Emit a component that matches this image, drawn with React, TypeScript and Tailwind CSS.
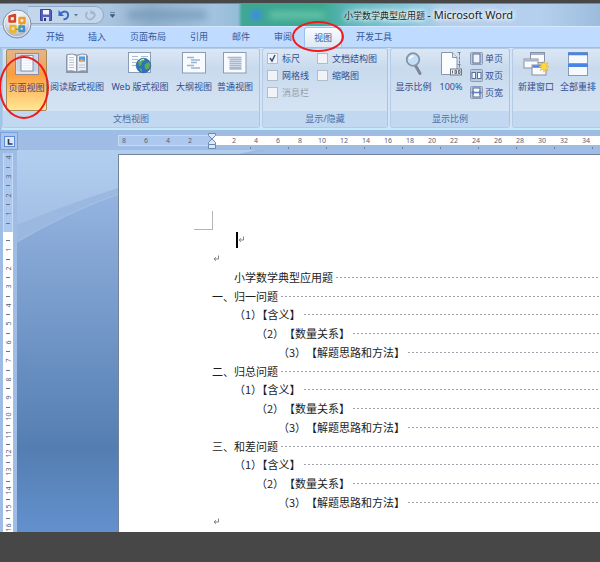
import type { ReactNode } from "react";
import clsx from "clsx";

const tabs = ["开始", "插入", "页面布局", "引用", "邮件", "审阅", "视图", "开发工具"];

const outline = [
  { title: "一、归一问题" },
  { title: "二、归总问题" },
  { title: "三、和差问题" },
];

const leftTicks = [8, 6, 4, 2];
const rightTicks = [2, 4, 6, 8, 10, 12, 14, 16, 18, 20, 22, 24, 26, 28, 30, 32, 34];
const topMarks = ["4", "-", "3", "-", "2", "-", "1", "-"];
const bottomMarks = Array.from({ length: 32 }, (_, i) =>
  i % 2 === 0 ? "-" : String((i + 1) / 2),
);

const OfficeLogo = () => (
  <svg viewBox="0 0 30 30" className="size-[30px]" aria-hidden="true">
    <defs>
      <radialGradient id="orb" cx="50%" cy="30%" r="75%">
        <stop offset="0" stopColor="#ffffff" />
        <stop offset="0.55" stopColor="#d9dee6" />
        <stop offset="1" stopColor="#8f9bab" />
      </radialGradient>
    </defs>
    <circle cx="15" cy="15" r="14" fill="url(#orb)" stroke="#8090a6" />
    <circle cx="15" cy="15" r="12.8" fill="none" stroke="#fff" strokeOpacity=".7" />
    <g fill="none" strokeWidth="2.4" strokeLinejoin="round">
      <path d="M13 12.500H7.500V7.500L13 6z" stroke="#d2452a" />
      <path d="M17.500 9h5v5h-5z" stroke="#f09a28" />
      <path d="M8.500 17H13.500v5.500h-5z" stroke="#f2b31c" />
      <path d="M17.500 17.500h4.500v4.500h-4.500z" stroke="#3f8fd0" />
    </g>
    <path d="M19 15.500v3M13.500 20.500l4-.5" stroke="#7cae3c" strokeWidth="1.600" />
  </svg>
);

const PageIcon = () => (
  <svg viewBox="0 0 24 22" className="h-[22px] w-6" aria-hidden="true">
    <rect x=".5" y=".5" width="23" height="21" fill="#e4e2e2" stroke="#8b8f9c" />
    <rect x="1.500" y="1.500" width="21" height="17" fill="#c6d3e5" />
    <rect x="6" y="2.500" width="12" height="15.500" fill="#f9fbfe" stroke="#7f92b2" />
    <path d="M8 5h8M8 7.500h8M8 10h8M8 12.500h8M8 15h8" stroke="#e6ecf4" />
  </svg>
);

const ReadingIcon = () => (
  <svg viewBox="0 0 24 22" className="h-[22px] w-6" aria-hidden="true">
    <path d="M1 4l1-2h9l1 1.500L13 2h8l2 2v17H1z" fill="#8a96a8" />
    <path d="M2 2.500Q8 1 11.500 3.500V20Q8 18 2 19z" fill="#f7f9fc" stroke="#8b98ac" />
    <path d="M12 3.500Q16 1 21.500 2.500V19Q16 18 12 20z" fill="#e9eef5" stroke="#8b98ac" />
    <path d="M4 5.500h5M4 8h5M4 10.500h5M4 13h5M4 15.500h5M14 13h6M14 15.500h6" stroke="#b7c4d6" />
    <rect x="14" y="4.500" width="6" height="5" fill="#4c9be6" />
    <path d="M14 9.500l2.500-3 3.500 3z" fill="#e9a35a" />
  </svg>
);

const WebIcon = () => (
  <svg viewBox="0 0 24 22" className="h-[22px] w-6" aria-hidden="true">
    <rect x=".5" y=".5" width="22" height="20" fill="#f7fafe" stroke="#8b9bb3" />
    <path d="M4 4.500h6M4 7.500h6M4 10.500h4M4 13.500h4M13 4.500h7" stroke="#a9bdd8" />
    <circle cx="15.500" cy="13.500" r="7.300" fill="#2f6fc4" stroke="#2a5596" strokeWidth=".6" />
    <path d="M10 10q2-4 6-3.500l1 2-3 1.500-.5 3-2.500 1zM17 12l4-2 1.500 3-2 4-3 .5-1-3zM11 16l3 1v3q-2-1-3-4z" fill="#58b04c" />
    <path d="M12 9q2-2 4-1.500" stroke="#cdeaff" fill="none" />
  </svg>
);

const OutlineIcon = () => (
  <svg viewBox="0 0 24 22" className="h-[22px] w-6" aria-hidden="true">
    <rect x=".5" y=".5" width="23" height="20.500" fill="#f7fafe" stroke="#8b9bb3" />
    <path d="M5 5.500h7M9 8h9M9 10.500h6M5 13.500h7M9 16h9" stroke="#9fb3d0" strokeWidth="1.500" />
  </svg>
);

const DraftIcon = () => (
  <svg viewBox="0 0 24 22" className="h-[22px] w-6" aria-hidden="true">
    <rect x=".5" y=".5" width="22.500" height="20.500" fill="#f7fafe" stroke="#8b9bb3" />
    <path d="M4.500 5.500h14M6.500 7.500h12M6.500 9.500h12M6.500 11.500h12M6.500 13.500h12M6.500 15.500h12M6.500 17h12" stroke="#a9b8cf" strokeWidth="1.400" />
  </svg>
);

const ZoomIcon = () => (
  <svg viewBox="0 0 24 24" className="size-6" aria-hidden="true">
    <path d="M13.500 13.500l4.500 8" stroke="#7d8696" strokeWidth="3" strokeLinecap="round" />
    <circle cx="11" cy="7.500" r="6.300" fill="#c4def6" stroke="#8494ab" strokeWidth="1.800" />
    <path d="M7.500 7q1-3 4-3" stroke="#fff" strokeWidth="1.500" fill="none" />
  </svg>
);

const HundredIcon = () => (
  <svg viewBox="0 0 24 24" className="size-6" aria-hidden="true">
    <path d="M2.500 .5h11l4.500 5v17H2.500z" fill="#fbfcfe" stroke="#8a97ab" />
    <path d="M13.500 .5v5H18" fill="#dce4ef" stroke="#8a97ab" />
    <path d="M20.500 .5v15M18.500 .5h4M18.500 12.500h4" stroke="#76849a" strokeDasharray="3 1" />
    <rect x="11.500" y="17" width="11" height="6" fill="#eef1f5" stroke="#6d7889" />
    <path d="M13.500 18.500v3M16 18.500h1.500v3H16zM19.500 18.500H21v3h-1.500z" stroke="#444d5c" strokeWidth=".8" fill="none" />
  </svg>
);

const NewWindowIcon = () => (
  <svg viewBox="0 0 26 24" className="h-6 w-[26px]" aria-hidden="true">
    <g fill="#f9fbfe" stroke="#8491a8">
      <rect x="7.500" y=".5" width="14" height="10" />
      <rect x="1" y="7" width="14" height="9" />
      <rect x="9" y="13" width="14" height="10" />
    </g>
    <path d="M8 2h13M1.500 8.500h13" stroke="#a9b2c2" strokeWidth="2" />
    <path d="M9.500 14.500h13" stroke="#4c86e6" strokeWidth="2.500" />
    <path d="M21 9l1 3 3-1.500-1.500 3 2.500 1-2.500 1.200 1.500 2.800-3-1.200-1 3-1-3-3 1.200 1.500-2.800-2.500-1.200 2.500-1-1.500-3 3 1.500z" fill="#ffd84a" stroke="#e8ac1c" strokeWidth=".5" />
  </svg>
);

const ArrangeIcon = () => (
  <svg viewBox="0 0 20 24" className="h-6 w-5" aria-hidden="true">
    <rect x=".5" y=".5" width="19" height="23" fill="#f6f9fd" stroke="#8a99b5" />
    <path d="M0 1.800h20M0 13.500h20" stroke="#4a84e4" strokeWidth="2.800" />
    <path d="M0 11.500h20" stroke="#8a99b5" />
  </svg>
);

const SmallPageIcon = ({ kind }: { kind: string }) => (
  <svg viewBox="0 0 13 13" className="size-[13px]" aria-hidden="true">
    <rect x=".5" y=".5" width="12" height="12" rx="1" fill="#b9c9df" stroke="#8b9cb8" />
    {kind === "单页" && <rect x="3" y="2" width="7" height="9" fill="#edf3fa" stroke="#5a6f94" />}
    {kind === "双页" && (
      <g fill="#f5f8fc" stroke="#5a6f94">
        <rect x="2" y="3.500" width="3.500" height="6" />
        <rect x="7.500" y="3.500" width="3.500" height="6" />
      </g>
    )}
    {kind === "页宽" && (
      <g>
        <rect x="3" y="2" width="7" height="9" fill="#f5f8fc" stroke="#5a6f94" />
        <path d="M1 6.500l3-2.500v1.700h5V4l3 2.500L9 9V7.300H4V9z" fill="#5b80bd" />
      </g>
    )}
  </svg>
);

const ParagraphMark = () => (
  <svg viewBox="0 0 7 7" className="size-[7px]" aria-hidden="true">
    <path d="M5.500 .5v3.500H1.500M3 2.300L1 4l2 1.800" fill="none" stroke="#777" strokeWidth=".9" />
  </svg>
);

const RedRing = ({ className }: { className: string }) => (
  <span
    className={clsx(
      "pointer-events-none absolute z-20 rounded-[50%] border-2 border-[#ee1c1c]",
      className,
    )}
  />
);

const Group = ({
  label,
  className,
  children,
}: {
  label: string;
  className: string;
  children: ReactNode;
}) => (
  <section
    className={clsx(
      "flex shrink-0 flex-col overflow-hidden rounded-[3px] border border-[#b4cbe6] border-r-[#a9c3e2] bg-linear-to-b from-[#dce7f4] from-0% via-[#c9daee] via-25% to-[#d9e8f6]",
      className,
    )}
  >
    <div className="flex flex-1 items-start">{children}</div>
    <h2 className="h-4 bg-[#c1d8f0] text-center leading-4 text-[#4a6ea8]">{label}</h2>
  </section>
);

const BigButton = ({
  label,
  icon,
  className,
  active = false,
}: {
  label: string;
  icon: ReactNode;
  className: string;
  active?: boolean;
}) => (
  <button
    type="button"
    className={clsx(
      "flex h-[62px] shrink-0 flex-col items-center gap-[5px] whitespace-nowrap pt-[3px]",
      active &&
        "rounded-xs border border-[#a58a5c] bg-linear-to-b from-[#e3b48c] from-0% via-[#fb9d3c] via-40% to-[#ffe793] pt-0.5",
      className,
    )}
  >
    <span className="flex h-6 items-start">{icon}</span>
    <span className="leading-3">{label}</span>
  </button>
);

const Check = ({
  label,
  checked = false,
  disabled = false,
}: {
  label: string;
  checked?: boolean;
  disabled?: boolean;
}) => (
  <label className={clsx("flex h-[17px] items-center gap-1 whitespace-nowrap", disabled && "text-[#9a9da3]")}>
    <span className="grid size-[11px]">
      <input
        type="checkbox"
        defaultChecked={checked}
        disabled={disabled}
        className="peer col-start-1 row-start-1 size-[11px] appearance-none border border-[#b3bcc9] bg-[#f1f3f6]"
      />
      <svg
        viewBox="0 0 11 11"
        className="pointer-events-none invisible col-start-1 row-start-1 size-[11px] peer-checked:visible"
        aria-hidden="true"
      >
        <path d="M3 5l2 3 3-6" fill="none" stroke="#35507f" strokeWidth="1.500" />
      </svg>
    </span>
    {label}
  </label>
);

const Entry = ({
  mark,
  text,
  className,
}: {
  mark?: string;
  text: string;
  className: string;
}) => (
  <li className={clsx("flex items-center whitespace-nowrap", className)}>
    {mark && <span>{mark}</span>}
    <span>{text}</span>
    <span className="ml-[3px] h-px flex-1 bg-[linear-gradient(to_right,#a3a3b0_2px,transparent_2px)] bg-[length:4px_1px]" />
  </li>
);

const TitleBar = () => (
  <header className="relative flex h-[23px] items-center border-t border-[#6f8ba8] bg-[linear-gradient(to_right,#b9cfe6_0px,#a9c4de_110px,#8fafcd_150px,#a3c3e0_215px,#94bdd8_238px,#3fa795_242px,#3aa98f_320px,#5fb7bd_350px,#8fc9e2_420px,#b3cfec_445px,#b5d0ee_540px,#9dbcdc_600px)]">
    <button type="button" aria-label="Office" className="absolute top-[5px] left-0.5 z-10">
      <OfficeLogo />
    </button>
    <div className="ml-7 flex h-[18px] w-[76px] items-center gap-1.5 rounded-r-full border border-l-0 border-[#8ea8c8] bg-[#c3d7ec] pl-3">
      <button type="button" aria-label="保存">
        <svg viewBox="0 0 12 12" className="size-3" aria-hidden="true">
          <path d="M.5 .5h10l1 1v10H.5z" fill="#5560c0" stroke="#3c449a" />
          <path d="M3 1h6v4.500H3z" fill="#f4f6fb" />
          <path d="M3 8h6v4H3z" fill="#d5daea" />
          <path d="M4 9h2v3H4z" fill="#2d3478" />
        </svg>
      </button>
      <button type="button" aria-label="撤消" className="flex items-center gap-1">
        <svg viewBox="0 0 12 12" className="size-3" aria-hidden="true">
          <path d="M2 4.500q7-4 8 .5t-4.500 5.500" fill="none" stroke="#3b69c6" strokeWidth="2" />
          <path d="M.5 1v6h5.500z" fill="#3b69c6" />
        </svg>
        <svg viewBox="0 0 4 3" className="h-[3px] w-1" aria-hidden="true">
          <path d="M0 0h4L2 2.500z" fill="#5b7aa8" />
        </svg>
      </button>
      <button type="button" aria-label="重复">
        <svg viewBox="0 0 12 12" className="size-3" aria-hidden="true">
          <path d="M3.500 3q-3 3-.5 6t6 0 0-6" fill="none" stroke="#a3b4cc" strokeWidth="1.800" />
          <path d="M6.500 .5v4.500h4.500z" fill="#a3b4cc" />
        </svg>
      </button>
    </div>
    <button type="button" aria-label="自定义快速访问工具栏" className="ml-1.5">
      <svg viewBox="0 0 5 6" className="h-1.5 w-[5px]" aria-hidden="true">
        <path d="M0 .5h5M0 2.500h5L2.500 5.500z" fill="#44597c" stroke="#44597c" strokeWidth=".6" />
      </svg>
    </button>
    <span className="ml-3 h-2.5 w-20 rounded-full bg-[#6d8fae]/50 blur-[3px]" />
    <span className="ml-11 size-2.5 bg-[#3f8fd8] blur-[2px]" />
    <span className="ml-2 h-2 w-14 rounded-full bg-[#7fd0b8]/60 blur-[3px]" />
    <h1 className="ml-[19px] whitespace-nowrap text-[11px] leading-4 text-[#1a1f28] [text-shadow:0_0_5px_#fff,0_0_5px_#fff,0_0_8px_#fff]">
      <span className="text-[9px]">小学数学典型应用题 </span> - Microsoft Word
    </h1>
  </header>
);

const Tabs = () => (
  <nav className="relative flex h-[21px] items-end border-t border-[#d6e8ff] bg-[#bfdbff] pl-[34px]">
    {tabs.map((tab) => (
      <button
        key={tab}
        type="button"
        className={clsx(
          "h-5 shrink-0 whitespace-nowrap text-[#34569a]",
          tab === "视图"
            ? "mr-0.5 rounded-t-[3px] border border-b-0 border-[#9fc0ea] bg-linear-to-b from-[#f7fbff] to-[#dde9f6] px-[9px]"
            : "px-3",
        )}
      >
        {tab}
      </button>
    ))}
    <RedRing className="-top-[6px] left-[292px] h-[31px] w-[52px]" />
  </nav>
);

const Ribbon = () => (
  <div className="relative flex h-[83px] gap-0.5 overflow-hidden rounded-l-[3px] border-y border-b-2 border-l-2 border-t-[#9dbfe8] border-b-[#c3ecf8] border-l-[#9fc4ea] bg-[#d3e4f6] text-[#2f4f8f]">
    <Group label="文档视图" className="w-[258px]">
      <BigButton active label="页面视图" icon={<PageIcon />} className="ml-[3px] w-[41px]" />
      <BigButton label="阅读版式视图" icon={<ReadingIcon />} className="w-[60px]" />
      <BigButton label="Web 版式视图" icon={<WebIcon />} className="w-[66px]" />
      <BigButton label="大纲视图" icon={<OutlineIcon />} className="w-[42px]" />
      <BigButton label="普通视图" icon={<DraftIcon />} className="w-[40px]" />
    </Group>
    <Group label="显示/隐藏" className="w-[126px]">
      <div className="grid grid-cols-[50px_auto] pt-px pl-1">
        <Check label="标尺" checked />
        <Check label="文档结构图" />
        <Check label="网格线" />
        <Check label="缩略图" />
        <Check label="消息栏" disabled />
      </div>
    </Group>
    <Group label="显示比例" className="w-[120px]">
      <BigButton label="显示比例" icon={<ZoomIcon />} className="ml-0.5 w-[41px]" />
      <BigButton label="100%" icon={<HundredIcon />} className="w-[34px]" />
      <div className="flex flex-col pt-px pl-0.5">
        {["单页", "双页", "页宽"].map((label) => (
          <button key={label} type="button" className="flex h-[17px] items-center gap-0.5">
            <SmallPageIcon kind={label} />
            {label}
          </button>
        ))}
      </div>
    </Group>
    <Group label="" className="min-w-[120px] flex-1">
      <BigButton label="新建窗口" icon={<NewWindowIcon />} className="ml-0.5 w-[42px]" />
      <BigButton label="全部重排" icon={<ArrangeIcon />} className="w-[42px]" />
    </Group>
  </div>
);

const HorizontalRuler = () => (
  <div className="flex h-5 overflow-hidden bg-[#9ebce4] text-[7px] text-[#56637a]">
    <button
      type="button"
      aria-label="制表符"
      className="mt-0.5 flex size-[18px] shrink-0 items-center justify-center border border-[#7ba0dc] bg-[#a9c5ec]"
    >
      <svg viewBox="0 0 11 11" className="size-[11px]" aria-hidden="true">
        <rect x=".5" y=".5" width="10" height="10" fill="#dce8f8" stroke="#5f8cd8" />
        <path d="M4.500 3v5h4" fill="none" stroke="#2d3a55" strokeWidth="1.600" />
      </svg>
    </button>
    <div className="mt-[5px] ml-[100px] flex h-[11px] w-[94px] shrink-0 justify-end overflow-hidden border-y border-l border-[#c5daf5] bg-[#adc8ee] pr-[11px]">
      {leftTicks.map((n) => (
        <span key={n} className="w-[22px] shrink-0 text-center leading-[9px]">
          {n}
        </span>
      ))}
    </div>
    <div className="relative flex-1">
      <div className="mt-[6px] flex h-[9px] overflow-hidden bg-white pl-[11px]">
        {rightTicks.map((n) => (
          <span key={n} className="w-[22px] shrink-0 text-center leading-[9px]">
            {n}
          </span>
        ))}
      </div>
      <div className="mt-0.5 ml-[38px] h-0.5 bg-[repeating-linear-gradient(to_right,#6c809f_0px,#6c809f_1px,transparent_1px,transparent_38px)]" />
      <svg viewBox="0 0 8 17" className="absolute top-[3px] -left-1 h-[17px] w-2" aria-hidden="true">
        <path d="M.5 .5h7v2L4 6 .5 2.500zM4 6l3.500 3.500v2h-7v-2z" fill="#dce8f8" stroke="#6d88b5" />
        <path d="M.5 11.500h7v4h-7z" fill="#dce8f8" stroke="#6d88b5" />
      </svg>
    </div>
  </div>
);

const RulerMarks = ({ marks }: { marks: string[] }) =>
  marks.map((mark, i) => (
    <span key={i} className="flex min-h-0 flex-1 items-center justify-center">
      {mark === "-" ? (
        <span className="h-px w-1 bg-[#6b7789]" />
      ) : (
        <span className="-rotate-90 leading-none">{mark}</span>
      )}
    </span>
  ));

const VerticalRuler = () => (
  <div className="flex w-[17px] shrink-0 flex-col overflow-hidden bg-[#9ebce4] pt-[3px] pr-1 pl-[3px] text-[7px] text-[#56637a] contain-size">
    <div className="flex h-[79px] shrink-0 flex-col border-x border-[#c5daf5] bg-[#adc8ee] pb-1">
      <RulerMarks marks={topMarks} />
    </div>
    <div className="flex h-[300px] shrink-0 flex-col bg-white pt-1">
      <RulerMarks marks={bottomMarks} />
    </div>
  </div>
);

const Page = () => (
  <main className="mt-1 min-w-0 flex-1 border-t border-l border-[#75839a] bg-white pt-14 pb-px pl-[93px] text-[11px] text-[#1c1c1c] font-['Noto_Sans_CJK_SC',sans-serif]">
    <div className="-ml-[18px] size-[19px] border-r border-b border-[#b5b5b5]" />
    <p className="flex h-[19px] items-center pl-6">
      <span className="h-4 w-0.5 bg-black" />
      <ParagraphMark />
    </p>
    <p className="flex h-[19px] items-center pl-px">
      <ParagraphMark />
    </p>
    <ul>
      <Entry text="小学数学典型应用题" className="h-[19px] pl-[22px]" />
      {outline.map(({ title }) => (
        <li key={title}>
          <ul>
            <Entry text={title} className="h-[18px]" />
            <Entry text="（1）【含义】" className="h-[19px] pl-[22px]" />
            <Entry mark="（2）" text="【数量关系】" className="h-[19px] pl-[44px]" />
            <Entry mark="（3）" text="【解题思路和方法】" className="h-[19px] pl-[66px]" />
          </ul>
        </li>
      ))}
    </ul>
    <p className="flex h-[19px] items-center pl-px">
      <ParagraphMark />
    </p>
  </main>
);

const Workspace = () => (
  <div className="flex">
    <VerticalRuler />
    <div className="relative flex min-w-0 flex-1 bg-linear-to-b from-[#a0bde8] from-0% via-[#547eb2] via-78% to-[#6391cd]">
      <svg
        viewBox="0 0 300 94"
        className="absolute top-0 left-0 h-[94px] w-[300px]"
        aria-hidden="true"
      >
        <defs>
          <linearGradient id="sky" x1="0" y1="0" x2="0" y2="1">
            <stop offset="0" stopColor="#b2ceef" />
            <stop offset="1" stopColor="#a3c0e5" />
          </linearGradient>
        </defs>
        <path d="M0 0H250Q165 18 101 44Q45 65 0 92z" fill="#9bb9e0" />
        <path d="M0 92Q45 65 101 44" fill="none" stroke="#a6c2e7" />
        <path d="M0 0H240Q160 16 101 38Q45 56 0 75z" fill="url(#sky)" />
      </svg>
      <div className="w-[101px] shrink-0" />
      <div className="relative flex min-w-0 flex-1">
        <Page />
      </div>
    </div>
  </div>
);

export default function App() {
  return (
    <div
      lang="zh-CN"
      className="min-h-screen overflow-hidden bg-[#474747] pt-[3px] text-[9px] font-['Noto_Sans','Noto_Sans_CJK_SC',sans-serif]"
    >
      <TitleBar />
      <Tabs />
      <div className="relative bg-[#9ebce4]">
        <Ribbon />
        <RedRing className="top-[9px] -left-px h-[63px] w-[50px]" />
      </div>
      <HorizontalRuler />
      <Workspace />
    </div>
  );
}
